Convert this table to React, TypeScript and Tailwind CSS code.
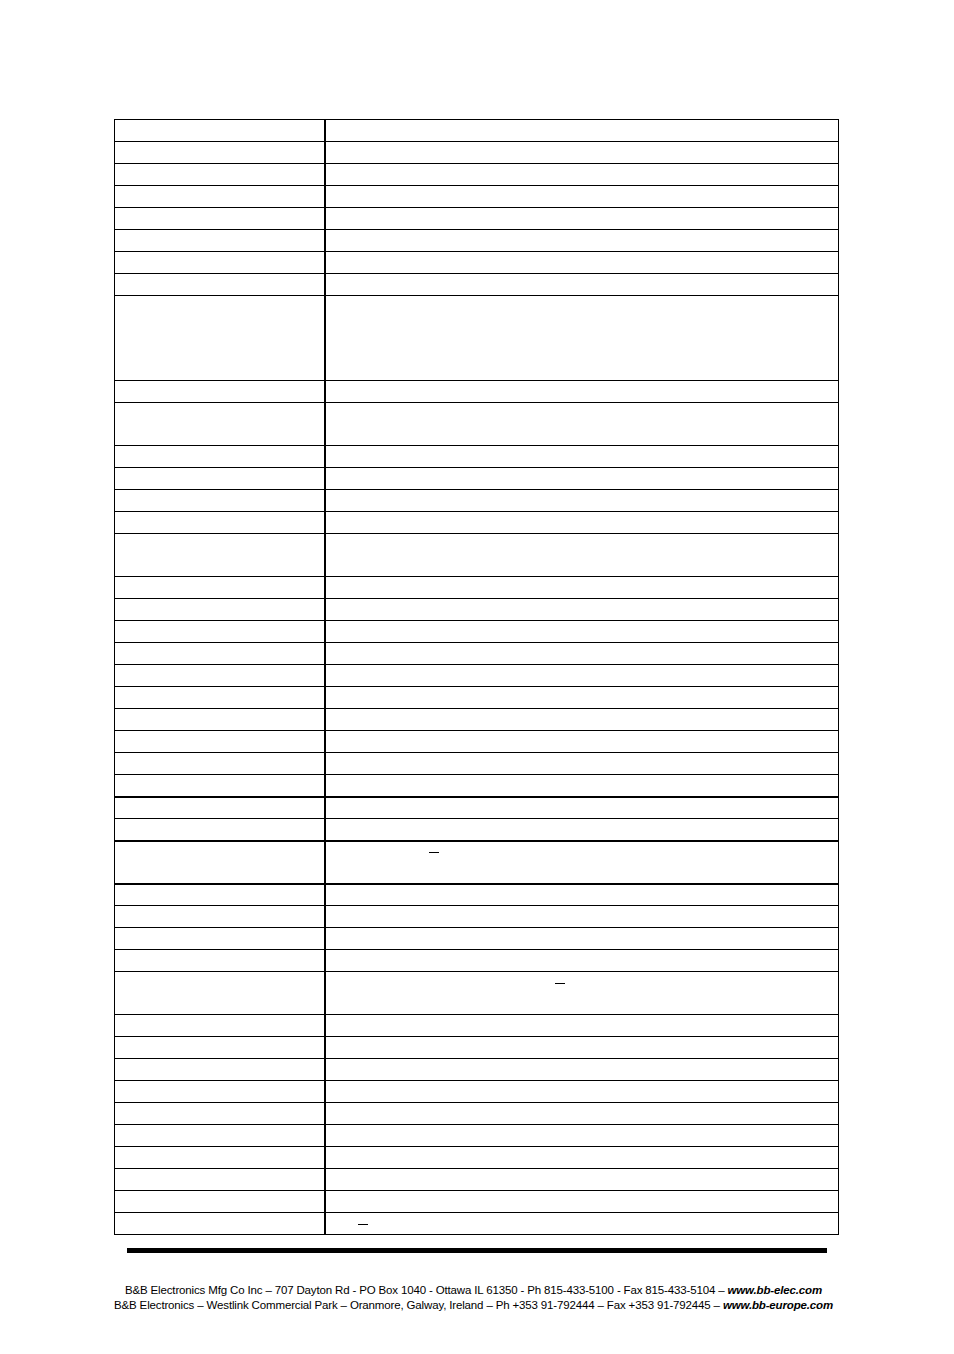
import React from "react";

type Row = { h: number; thick?: boolean; dash?: number; dashY?: number };

const rows: Row[] = [
  { h: 22 }, { h: 22 }, { h: 22 }, { h: 22 }, { h: 22 }, { h: 22 }, { h: 22 }, { h: 22 },
  { h: 85 },
  { h: 22 },
  { h: 43 },
  { h: 22 }, { h: 22 }, { h: 22 }, { h: 22 },
  { h: 43 },
  { h: 22 }, { h: 22 }, { h: 22 }, { h: 22 }, { h: 22 }, { h: 22 }, { h: 22 }, { h: 22 }, { h: 22 }, { h: 22 },
  { h: 22, thick: true },
  { h: 22 },
  { h: 43, thick: true, dash: 103, dashY: 10 },
  { h: 22, thick: true },
  { h: 22 }, { h: 22 }, { h: 22 },
  { h: 43, dash: 229, dashY: 11 },
  { h: 22 }, { h: 22 }, { h: 22 }, { h: 22 }, { h: 22 }, { h: 22 }, { h: 22 }, { h: 22 }, { h: 22 },
  { h: 22, dash: 32, dashY: 11 },
];

export default function App() {
  return (
    <div className="w-[954px] h-[1354px] bg-white relative" style={{ fontFamily: '"Liberation Sans", Arial, sans-serif' }}>
      <div className="pt-[119px] pl-[114px]">
        <div className="w-[725px] border-l border-r border-b border-black">
          {rows.map((r, i) => (
            <div
              key={i}
              className={`flex border-black ${r.thick ? "border-t-2" : "border-t"}`}
              style={{ height: r.h }}
            >
              <div className="w-[209px] shrink-0" />
              <div className="w-[2px] bg-black shrink-0" />
              <div className="flex-1 relative">
                {r.dash !== undefined && (
                  <span
                    className="absolute block h-[1px] w-[10px] bg-black"
                    style={{ left: r.dash, top: r.dashY }}
                  />
                )}
              </div>
            </div>
          ))}
        </div>
        <div className="ml-[13px] mt-[13px] w-[700px] h-[5px] bg-black" />
        <div className="w-[719px] mt-[30px] text-[11.5px] leading-[15px] tracking-[-0.15px] text-black text-center whitespace-nowrap">
          <div>
            B&amp;B Electronics Mfg Co Inc – 707 Dayton Rd - PO Box 1040 - Ottawa IL 61350 - Ph 815-433-5100 - Fax 815-433-5104 – <b><i>www.bb-elec.com</i></b>
          </div>
          <div>
            B&amp;B Electronics – Westlink Commercial Park – Oranmore, Galway, Ireland – Ph +353 91-792444 – Fax +353 91-792445 – <b><i>www.bb-europe.com</i></b>
          </div>
        </div>
      </div>
    </div>
  );
}
